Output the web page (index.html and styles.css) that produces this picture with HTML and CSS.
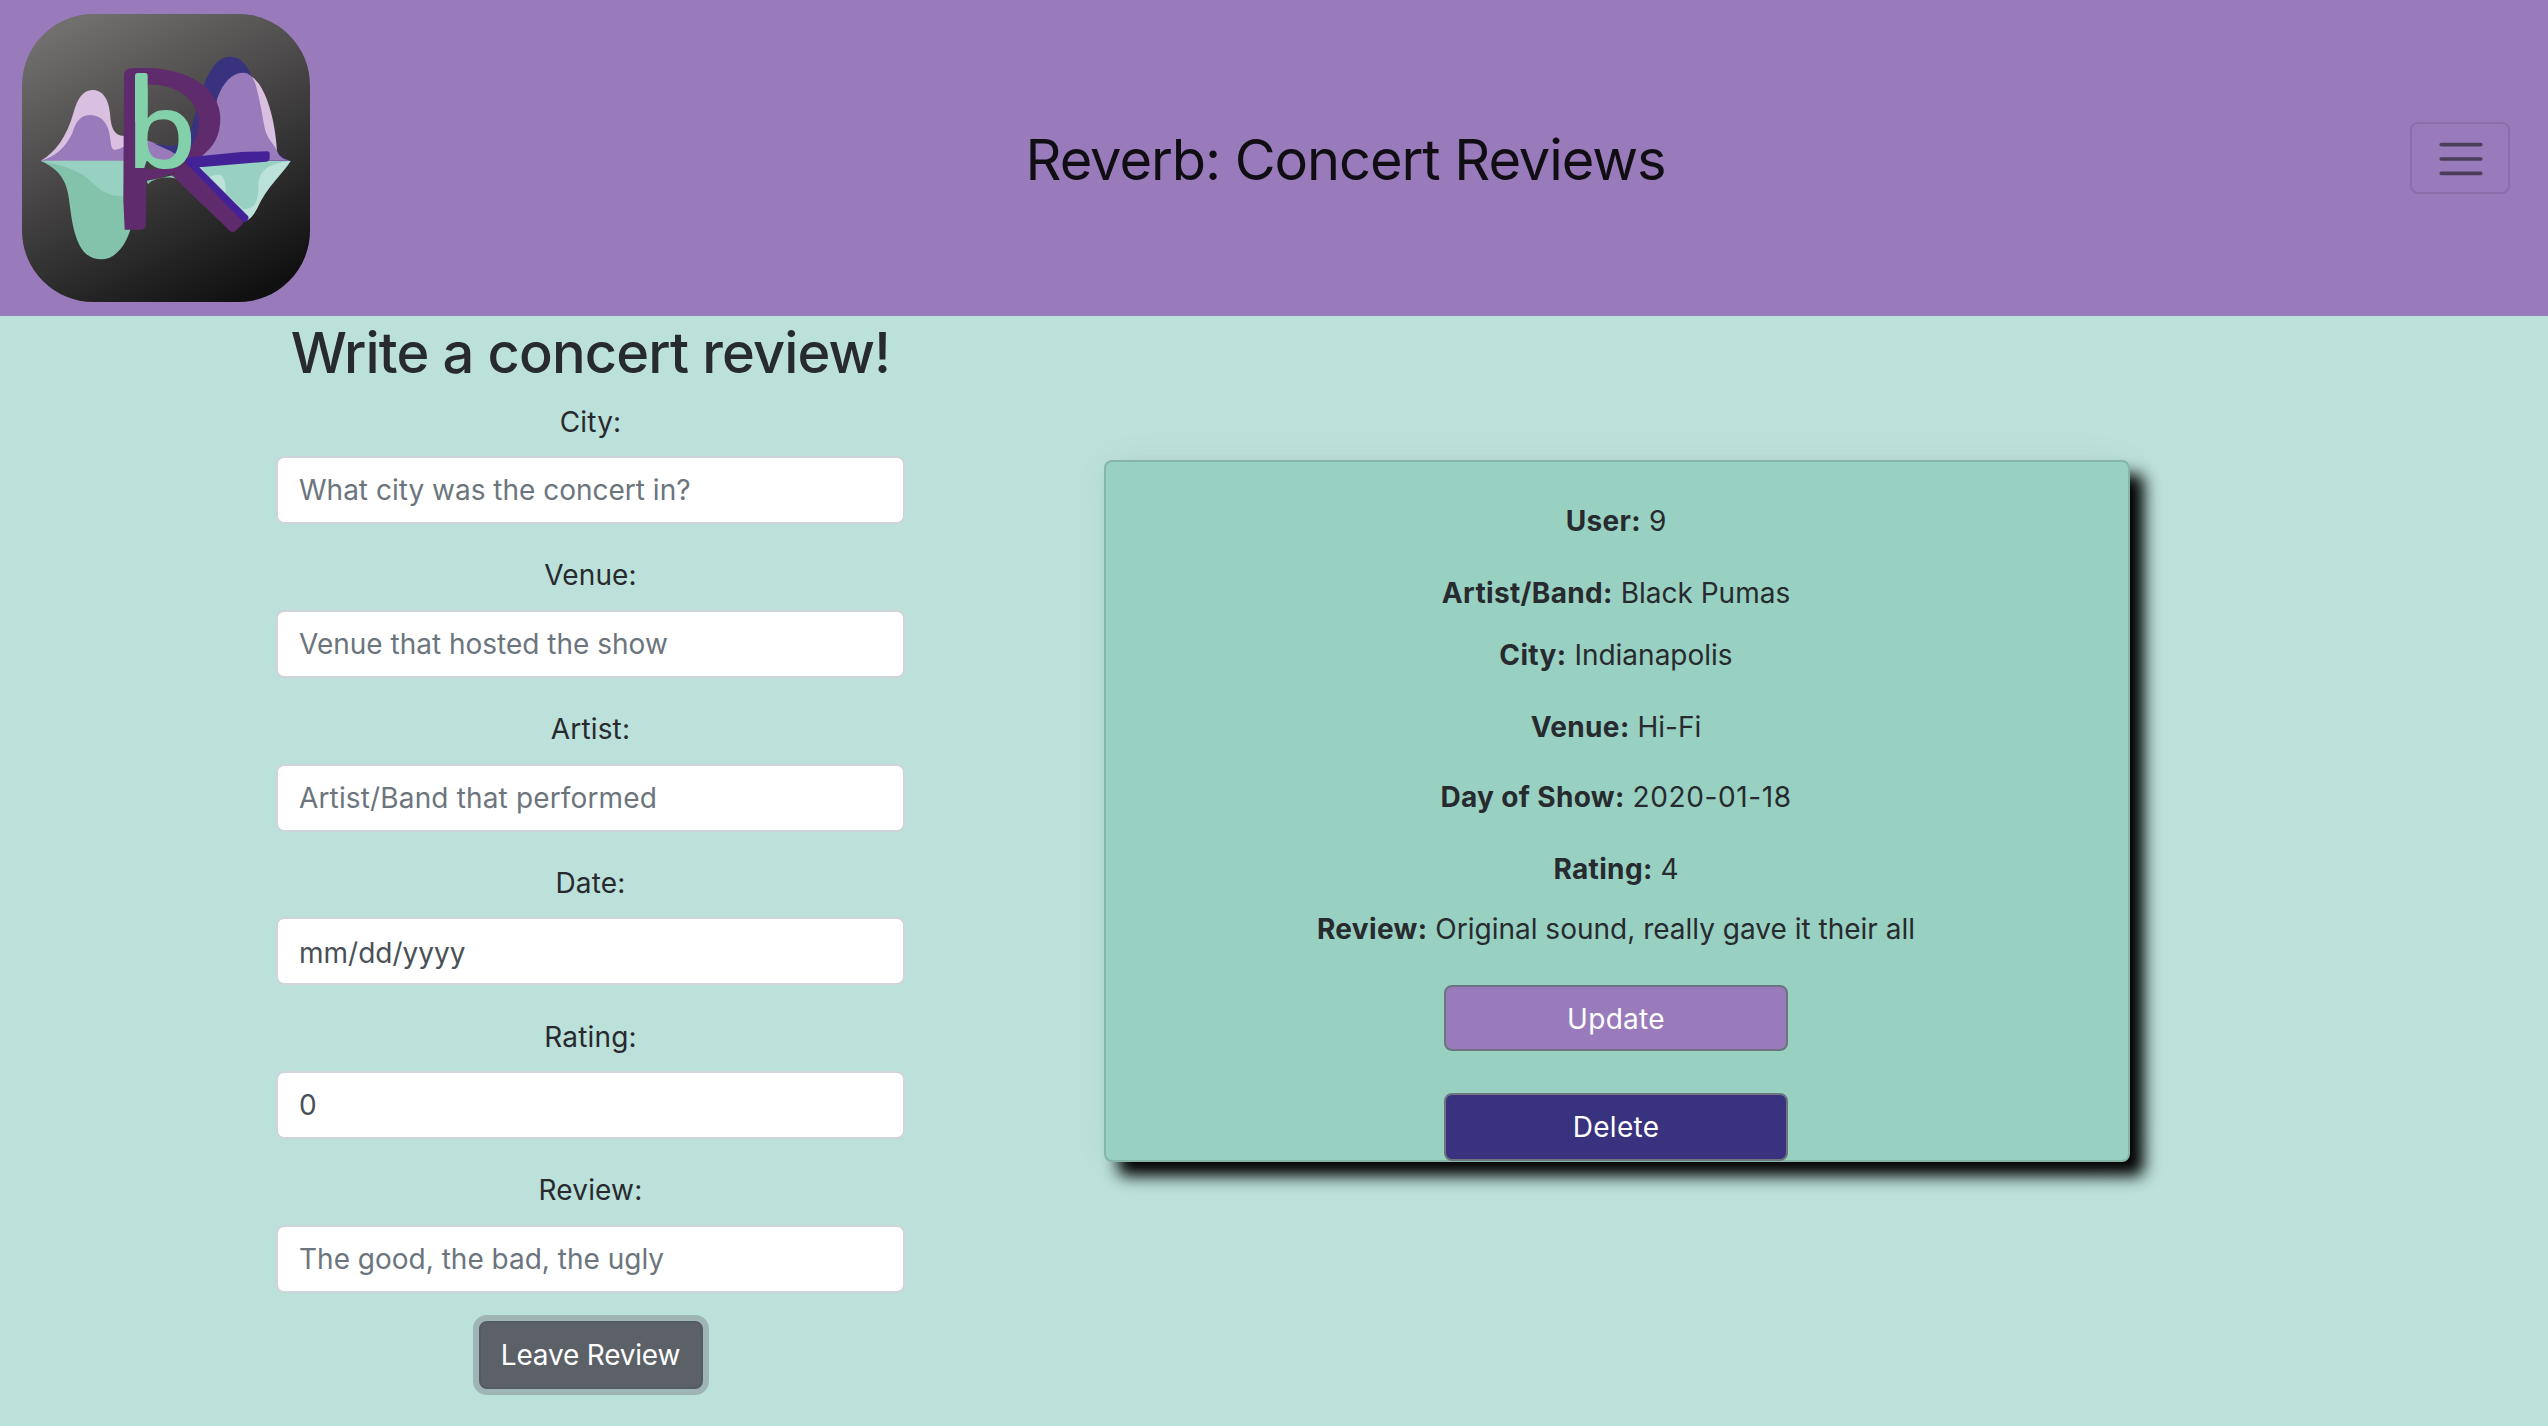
FILE: index.html
```html
<!DOCTYPE html>
<html lang="en">
<head>
<meta charset="utf-8">
<title>Reverb: Concert Reviews</title>
<link rel="stylesheet" href="styles.css">
</head>
<body>
<header class="navbar">
  <svg class="logo" viewBox="66 42 864 864" role="img" aria-label="Reverb logo">
    <defs>
      <linearGradient id="tile" x1="0.25" y1="0" x2="0.75" y2="1">
        <stop offset="0" stop-color="#716f6d"/>
        <stop offset="0.4" stop-color="#4a4848"/>
        <stop offset="1" stop-color="#101010"/>
      </linearGradient>
    </defs>
    <rect x="66" y="42" width="864" height="864" rx="214" fill="url(#tile)"/>
    <path fill="#d9c0e0" d="M122 482C165 460 200 410 220 340C232 295 250 270 277 270C310 270 326 300 330 340C333 390 345 408 375 408V482Z"/>
    <path fill="#997bbb" d="M122 482C165 472 198 440 217 400C228 360 245 345 271 345C305 346 325 370 330 410C334 445 336 450 348 449C362 447 366 440 380 438L445 422C475 430 500 448 530 455L560 482Z"/>
    <path fill="#39327f" d="M460 430C530 445 555 440 575 380C590 330 600 290 612 256C630 205 655 170 692 170C722 170 742 196 755 230L775 300L832 455C842 468 856 478 872 482H560L510 452Z"/>
    <path fill="#d9c0e0" d="M755 230C795 255 825 350 831 455L790 420L750 280Z"/>
    <path fill="#997bbb" d="M560 482C620 450 640 350 652 295C668 250 695 218 728 218C750 218 761 232 768 258C785 320 788 360 797 395C808 425 830 440 834 460C842 474 856 480 872 482Z"/>
    <path fill="#83c3ab" d="M122 482H400V655C388 720 355 778 304 778C245 778 222 720 210 620C203 550 190 515 122 482Z"/>
    <path fill="#98d0c1" d="M122 483H400V588C330 592 310 580 272 543C235 510 190 496 122 483Z"/>
    <path fill="#bbe1d9" d="M560 483H872C850 520 800 560 772 625C758 650 750 656 740 662L610 530Z"/>
    <path fill="#98d0c1" d="M590 483H872C800 490 775 515 775 560C775 600 768 628 728 627L678 580C676 545 674 522 652 524C640 526 632 528 628 532Z"/>
    <path fill="#83c3ab" d="M440 542L520 526L530 536C500 528 460 532 444 553Z"/>
    <g fill="#602b6c">
      <path d="M372 222Q374 204 402 204H442C570 206 661 270 661 355C661 410 640 440 606 468L556 484L530 515Q490 532 438 542V508C520 508 596 450 596 365C596 305 535 250 438 254V672Q437 689 422 689H374L370 600Z"/>
      <path d="M516 526L570 476L728 664Q732 668 728 672L706 693Q698 700 690 693Z"/>
    </g>
    <g fill="#83d1aa">
      <rect x="405" y="219" width="38" height="150" rx="8"/>
      <text class="mark" transform="translate(377 505) scale(0.93 0.846)">b</text>
    </g>
    <path fill="#432298" d="M558 478Q561 472 572 471L724 456L802 454Q809 454 809 462V476Q808 484 798 485L598 502L744 648Q748 654 742 661Q737 668 731 667L560 492Q554 485 558 478Z"/>
  </svg>
  <h1 class="brand">Reverb: Concert Reviews</h1>
  <button class="toggler" aria-label="Menu">
    <svg class="bars" viewBox="0 0 30 30"><path d="M4 7h22M4 15h22M4 23h22"/></svg>
  </button>
</header>
<main class="page">
  <form class="review-form">
    <h2 class="form-title">Write a concert review!</h2>
    <label class="label" for="city">City:</label>
    <input class="field" id="city" placeholder="What city was the concert in?">
    <label class="label" for="venue">Venue:</label>
    <input class="field" id="venue" placeholder="Venue that hosted the show">
    <label class="label" for="artist">Artist:</label>
    <input class="field field-artist" id="artist" placeholder="Artist/Band that performed">
    <label class="label" for="date">Date:</label>
    <input class="field field-date" id="date" value="mm/dd/yyyy">
    <label class="label" for="rating">Rating:</label>
    <input class="field" id="rating" value="0">
    <label class="label" for="review">Review:</label>
    <input class="field" id="review" placeholder="The good, the bad, the ugly">
    <button class="submit" type="button">Leave Review</button>
  </form>
  <article class="card">
    <p class="row"><b>User:</b> 9</p>
    <p class="row row-paired"><b>Artist/Band:</b> Black Pumas</p>
    <p class="row"><b>City:</b> Indianapolis</p>
    <p class="row row-venue"><b>Venue:</b> Hi-Fi</p>
    <p class="row"><b>Day of Show:</b> <span class="date">2020-01-18</span></p>
    <p class="row row-rating"><b>Rating:</b> 4</p>
    <p class="row row-last"><b>Review:</b> Original sound, really gave it their all</p>
    <button class="action update">Update</button>
    <button class="action delete">Delete</button>
  </article>
</main>
</body>
</html>
```
FILE: styles.css
```css
* { box-sizing: border-box; }

body {
  margin: 0;
  min-height: 1426px;
  background: #bce1da;
  color: #272a2e;
  font-family: Inter, "Liberation Sans", sans-serif;
  font-size: 28px;
  line-height: 42px;
}

.navbar {
  display: flex;
  align-items: center;
  justify-content: space-between;
  height: 316px;
  padding: 0 38px 0 22px;
  background: #997bbb;
}

.logo { width: 288px; height: 288px; }
.mark { font: 500 372px "Noto Sans", sans-serif; }

.brand {
  margin: 4px 29px 0 0;
  font-size: 56px;
  font-weight: 400;
  line-height: 84px;
  letter-spacing: -1.09px;
  color: #100e13;
}

.toggler {
  display: flex;
  align-items: center;
  justify-content: center;
  width: 100px;
  height: 72px;
  padding: 2px 0 0 2px;
  background: none;
  border: 2px solid rgba(0, 0, 0, 0.1);
  border-radius: 8px;
}

.bars {
  width: 54px;
  height: 54px;
  fill: none;
  stroke: rgba(0, 0, 0, 0.5);
  stroke-width: 2;
  stroke-linecap: round;
}

.page { display: flex; align-items: flex-start; }

.review-form {
  display: flex;
  flex-direction: column;
  align-items: center;
  width: 629px;
  margin-left: 276px;
}

.form-title {
  margin: 4px 0 13.5px;
  font-size: 56px;
  font-weight: 500;
  line-height: 67px;
  letter-spacing: -0.87px;
}

.label { height: 55.5px; line-height: 42px; letter-spacing: 0.15px; }

.field {
  width: 629px;
  height: 68px;
  margin: 0 0 30.3px;
  padding: 0 21px;
  border: 2px solid #ced4da;
  border-radius: 8px;
  background: #fff;
  color: #495057;
  font: inherit;
}
.field::placeholder { color: #6c757d; opacity: 1; }
.field-artist { letter-spacing: 0.15px; }
.field-date { padding-top: 3px; }

.submit {
  width: 224px;
  height: 68px;
  margin-top: -2px;
  padding: 0;
  border: 2px solid #545b62;
  border-radius: 8px;
  background: #5c6168;
  box-shadow: 0 0 0 6px #9fb4b5;
  color: #fff;
  font: inherit;
  letter-spacing: -0.2px;
}

.card {
  display: flex;
  flex-direction: column;
  align-items: center;
  width: 1026px;
  height: 702px;
  margin: 144px 0 0 199px;
  padding: 37.5px 2px 0 0;
  border: 2px solid #85b6a9;
  border-radius: 8px;
  background: #98d0c1;
  box-shadow: 14px 14px 16px #000, 0 0 40px rgba(0, 0, 0, 0.04);
}

.row { margin: 0 0 30px; }
.row b { letter-spacing: 0.35px; }
.row-paired { margin-bottom: 20px; }
.row-venue { margin-bottom: 28.5px; }
.row-rating { margin-bottom: 18px; }
.row-last { margin-bottom: 35px; }
.date { letter-spacing: 0.6px; }

.action {
  flex: none;
  width: 344px;
  height: 66px;
  padding: 0;
  border: 2px solid #6c757d;
  border-radius: 8px;
  color: #fff;
  font: inherit;
  letter-spacing: 0.3px;
}
.update { margin-bottom: 42px; padding-top: 2px; background: #997bbb; }
.delete { height: 68px; background: #39327f; }
```
